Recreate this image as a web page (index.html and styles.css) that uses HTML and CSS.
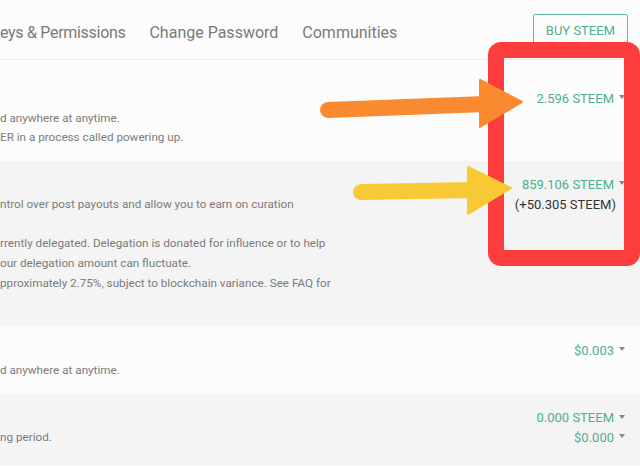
FILE: index.html
```html
<!DOCTYPE html>
<html lang="en">
<head>
  <meta charset="UTF-8" />
  <meta name="viewport" content="width=device-width, initial-scale=1.0"/>
  <title>Wallet</title>
  <link rel="stylesheet" href="styles.css">
</head>
<body>
  <div class="page">
    <header class="topbar">
      <nav class="tabs">
        <a class="tab">eys &amp; Permissions</a>
        <a class="tab">Change Password</a>
        <a class="tab">Communities</a>
      </nav>
      <a class="buy-btn">BUY STEEM</a>
    </header>

    <div class="balance-row row-first">
      <div class="desc">
        <p>&nbsp;</p>
        <p>d anywhere at anytime.</p>
        <p>ER in a process called powering up.</p>
      </div>
      <div class="amount">
        <p><span class="value">2.596 STEEM</span><span class="caret"></span></p>
      </div>
    </div>

    <div class="balance-row alt">
      <div class="desc">
        <p>&nbsp;</p>
        <p>ntrol over post payouts and allow you to earn on curation</p>
        <p>&nbsp;</p>
        <p>rrently delegated. Delegation is donated for influence or to help</p>
        <p>our delegation amount can fluctuate.</p>
        <p>pproximately 2.75%, subject to blockchain variance. See FAQ for</p>
        <p>&nbsp;</p>
      </div>
      <div class="amount">
        <p><span class="value">859.106 STEEM</span><span class="caret"></span></p>
        <p class="delegated">(+50.305 STEEM)</p>
      </div>
    </div>

    <div class="balance-row row-dollars">
      <div class="desc">
        <p>&nbsp;</p>
        <p>d anywhere at anytime.</p>
      </div>
      <div class="amount">
        <p><span class="value">$0.003</span><span class="caret"></span></p>
      </div>
    </div>

    <div class="balance-row alt row-last">
      <div class="desc">
        <p>&nbsp;</p>
        <p>ng period.</p>
      </div>
      <div class="amount">
        <p><span class="value">0.000 STEEM</span><span class="caret"></span></p>
        <p><span class="value">$0.000</span><span class="caret"></span></p>
      </div>
    </div>

    <!-- highlight box and arrows drawn over the wallet -->
    <svg class="marks" width="640" height="466" viewBox="0 0 640 466">
      <rect x="496" y="50" width="136" height="208" rx="5" fill="none" stroke="#fd3c3e" stroke-width="16"/>
      <line x1="328" y1="110" x2="486" y2="104" stroke="#f98a2f" stroke-width="16" stroke-linecap="round"/>
      <polygon points="480,80 480,127 522,102" fill="#f98a2f" stroke="#f98a2f" stroke-width="2" stroke-linejoin="round"/>
      <line x1="361" y1="192" x2="474" y2="190" stroke="#f8c934" stroke-width="16" stroke-linecap="round"/>
      <polygon points="468,167 468,214 511,188" fill="#f8c934" stroke="#f8c934" stroke-width="2" stroke-linejoin="round"/>
    </svg>
  </div>
</body>
</html>
```

FILE: styles.css
```css
body {
  font-family: Roboto, "Liberation Sans", sans-serif;
  background: #fcfcfc;
  color: #777;
  margin: 0;
}
p {
  margin: 0;
}
.page {
  position: relative;
  width: 640px;
  height: 466px;
  overflow: hidden;
}
.topbar {
  display: flex;
  justify-content: space-between;
  align-items: flex-start;
  height: 59px;
  border-bottom: 1px solid #eeeeee;
}
.tabs {
  display: flex;
  gap: 20px;
  margin-top: 23px;
}
.tab {
  font-size: 16px;
  line-height: 20px;
  color: #7a7a7a;
  white-space: nowrap;
}
.tab + .tab {
  margin-left: 4px;
}
.tab:first-child {
  letter-spacing: -0.3px;
}
.buy-btn {
  margin-top: 14px;
  margin-right: 12px;
  height: 34px;
  box-sizing: border-box;
  padding: 0 12px;
  border: 1px solid #5fbb9f;
  border-radius: 2px;
  font-size: 13px;
  line-height: 32px;
  color: #4fae92;
}
.balance-row {
  display: flex;
  justify-content: space-between;
  padding: 14px 0 13px;
  background: #fcfcfc;
  font-size: 11.7px;
  line-height: 19.7px;
}
.balance-row.alt {
  background: #f4f4f4;
}
.row-first {
  padding-top: 29px;
}
.row-dollars {
  padding: 15px 0 14px;
}
.row-last {
  padding-bottom: 17px;
}
.desc {
  white-space: nowrap;
  color: #7b7b7b;
}
.amount {
  padding-right: 15px;
  text-align: right;
  font-size: 13px;
}
.amount p {
  display: flex;
  justify-content: flex-end;
  align-items: center;
}
.value {
  color: #4fae92;
}
.caret {
  width: 0;
  height: 0;
  margin-left: 5px;
  margin-top: -3px;
  border-left: 3.5px solid transparent;
  border-right: 3.5px solid transparent;
  border-top: 4px solid #888;
}
.amount p.delegated {
  color: #333;
  padding-right: 9px;
}
.marks {
  position: absolute;
  top: 0;
  left: 0;
}
```
